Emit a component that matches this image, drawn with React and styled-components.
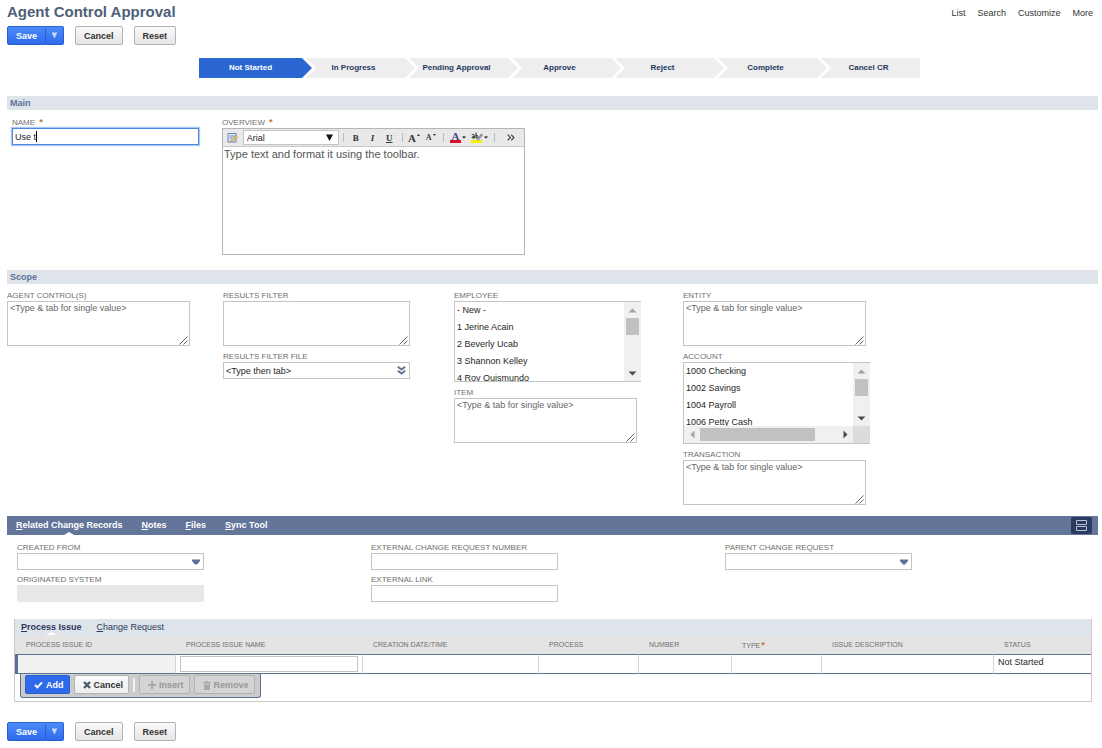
import React from "react"
import styled, { createGlobalStyle } from "styled-components"

const STEPS = [
	"Not Started",
	"In Progress",
	"Pending Approval",
	"Approve",
	"Reject",
	"Complete",
	"Cancel CR",
]

const EMPLOYEES = [
	"- New -",
	"1 Jerine Acain",
	"2 Beverly Ucab",
	"3 Shannon Kelley",
	"4 Roy Quismundo",
]

const ACCOUNTS = ["1000 Checking", "1002 Savings", "1004 Payroll", "1006 Petty Cash"]

const COLUMNS = [
	{ title: "Process Issue ID", width: 160 },
	{ title: "Process Issue Name", width: 187 },
	{ title: "Creation Date/Time", width: 176 },
	{ title: "Process", width: 100 },
	{ title: "Number", width: 93 },
	{ title: "Type", width: 90, required: true },
	{ title: "Issue Description", width: 172 },
	{ title: "Status", width: 98 },
]

const MULTI_HINT = "<Type & tab for single value>"

function FormButtons() {
	return (
		<ButtonRow>
			<SplitButton>
				<SaveButton type='button'>Save</SaveButton>
				<SaveMenuButton type='button' aria-label='Save options'>
					<svg width='7' height='7' viewBox='0 0 7 7'>
						<path d='M0.7 0.5H6.3L3.5 6.5Z' fill='#c9d9fb' />
					</svg>
				</SaveMenuButton>
			</SplitButton>
			<PlainButton type='button'>Cancel</PlainButton>
			<PlainButton type='button'>Reset</PlainButton>
		</ButtonRow>
	)
}

function Label({ htmlFor, required, children }) {
	return (
		<FieldLabel htmlFor={htmlFor}>
			{children}
			{required && <Required>*</Required>}
		</FieldLabel>
	)
}

function AreaField({ id, label, hint, wide }) {
	return (
		<Field>
			<Label htmlFor={id}>{label}</Label>
			<AreaBox $wide={wide}>
				<Area id={id} defaultValue={hint} />
				<Grip width='9' height='9' viewBox='0 0 9 9' aria-hidden='true'>
					<path d='M0.5 8.5L8.5 0.5M4.5 8.5L8.5 4.5' stroke='#666' fill='none' />
				</Grip>
			</AreaBox>
		</Field>
	)
}

function TextField({ id, label, disabled }) {
	return (
		<Field>
			<Label htmlFor={id}>{label}</Label>
			<TextInput id={id} disabled={disabled} />
		</Field>
	)
}

function SelectField({ id, label }) {
	return (
		<Field>
			<Label htmlFor={id}>{label}</Label>
			<InputBox>
				<DropDown id={id}>
					<option value=''></option>
				</DropDown>
				<svg width='8' height='6' viewBox='0 0 8 6' aria-hidden='true'>
					<path d='M0 0.5H8V2L5 5.5H3L0 2Z' fill='#5f6f9c' />
				</svg>
			</InputBox>
		</Field>
	)
}

function Triangle({ direction, dim }) {
	const paths = {
		up: "M0.5 6.5H8.5L4.5 2.5Z",
		down: "M0.5 2.5H8.5L4.5 6.5Z",
		left: "M6.5 0.5V8.5L2.5 4.5Z",
		right: "M2.5 0.5V8.5L6.5 4.5Z",
	}
	return (
		<svg width='9' height='9' viewBox='0 0 9 9'>
			<path d={paths[direction]} fill={dim ? "#a3a3a3" : "#4d4d4d"} />
		</svg>
	)
}

function ListField({ id, label, options, scrollX }) {
	return (
		<Field>
			<Label htmlFor={id}>{label}</Label>
			<ListBox $scrollX={scrollX}>
				<List id={id} multiple>
					{options.map((option) => (
						<option key={option}>{option}</option>
					))}
				</List>
				<ScrollBar aria-hidden='true'>
					<ScrollEnd><Triangle direction='up' dim /></ScrollEnd>
					<Thumb />
					<ScrollEnd $last><Triangle direction='down' /></ScrollEnd>
				</ScrollBar>
				{scrollX && (
					<>
						<ScrollBar $horizontal aria-hidden='true'>
							<ScrollEnd><Triangle direction='left' dim /></ScrollEnd>
							<Thumb $horizontal />
							<ScrollEnd $last><Triangle direction='right' /></ScrollEnd>
						</ScrollBar>
						<ScrollCorner />
					</>
				)}
			</ListBox>
		</Field>
	)
}

function EditorToolbar() {
	return (
		<Toolbar>
			<Tool type='button' $width={20} aria-label='Edit source'>
				<svg width='11' height='11' viewBox='0 0 11 11'>
					<rect x='1' y='1.5' width='8' height='8.5' fill='#dce6f7' stroke='#7486ae' />
					<path d='M2.5 4H7.5M2.5 6H5' stroke='#6f8ac4' />
					<path d='M4 8.5L9 3L10.5 4.5L5.5 9.5L3.5 10Z' fill='#e4c66a' stroke='#94875a' strokeWidth='0.6' />
				</svg>
			</Tool>
			<FontBox>
				<FontSelect aria-label='Font'>
					<option>Arial</option>
				</FontSelect>
				<svg width='7' height='7' viewBox='0 0 7 7' aria-hidden='true'>
					<path d='M0 0.5H7L3.5 7Z' fill='#111' />
				</svg>
			</FontBox>
			<Divider />
			<Tool type='button'><b>B</b></Tool>
			<Tool type='button'><i>I</i></Tool>
			<Tool type='button'><u>U</u></Tool>
			<Divider />
			<Tool type='button' aria-label='Increase size'>
				<Big>A</Big>
				<svg width='3' height='8' viewBox='0 0 3 8'>
					<path d='M0 2L1.5 0L3 2Z' fill='#333' />
				</svg>
			</Tool>
			<Tool type='button' aria-label='Decrease size'>
				<Small>A</Small>
				<svg width='3' height='8' viewBox='0 0 3 8'>
					<path d='M0 0L1.5 2L3 0Z' fill='#333' />
				</svg>
			</Tool>
			<Divider />
			<Tool type='button' $width={22} aria-label='Text color'>
				<Swatch $color='#d9122b'>A</Swatch>
				<svg width='4' height='3' viewBox='0 0 4 3'>
					<path d='M0 0.5H4L2 2.5Z' fill='#111' />
				</svg>
			</Tool>
			<Tool type='button' $width={22} aria-label='Highlight color'>
				<svg width='12' height='12' viewBox='0 0 12 12'>
					<rect x='0' y='8' width='11' height='3' fill='#f6f000' />
					<path d='M5.5 8L10 1.5L12 3L7.5 8.5Z' fill='#8c93a8' />
					<path d='M0.8 2.9C2 2 3.3 2.4 3.3 3.6V6.4M3.3 4.2C1 4.2 0.5 5.9 1.6 6.1C2.5 6.2 3.3 5.6 3.3 5M5 0.5V6C7.4 6.4 7.6 3 5.2 3.3' fill='none' stroke='#222' strokeWidth='1' />
				</svg>
				<svg width='4' height='3' viewBox='0 0 4 3'>
					<path d='M0 0.5H4L2 2.5Z' fill='#111' />
				</svg>
			</Tool>
			<Divider />
			<Tool type='button' $width={26} aria-label='More tools'>
				<svg width='8' height='7' viewBox='0 0 8 7'>
					<path d='M0.7 0.7L3.4 3.5L0.7 6.3M4.2 0.7L6.9 3.5L4.2 6.3' fill='none' stroke='#444' strokeWidth='1.2' />
				</svg>
			</Tool>
		</Toolbar>
	)
}

function IssueTable() {
	return (
		<Table>
			<colgroup>
				{COLUMNS.map((column) => (
					<Col key={column.title} $width={column.width} />
				))}
			</colgroup>
			<thead>
				<tr>
					{COLUMNS.map((column) => (
						<th key={column.title}>
							{column.title}
							{column.required && <Required $tight>*</Required>}
						</th>
					))}
				</tr>
			</thead>
			<tbody>
				<tr>
					<ReadOnlyCell />
					<td>
						<CellInput aria-label='Process Issue Name' />
					</td>
					<td />
					<td />
					<td />
					<td />
					<td />
					<td>Not Started</td>
				</tr>
			</tbody>
		</Table>
	)
}

export default function App() {
	return (
		<Page>
			<GlobalStyle />
			<Header>
				<div>
					<Title>Agent Control Approval</Title>
					<FormButtons />
				</div>
				<Nav>
					<a href='#list'>List</a>
					<a href='#search'>Search</a>
					<a href='#customize'>Customize</a>
					<a href='#more'>More</a>
				</Nav>
			</Header>

			<Steps>
				{STEPS.map((step, i) => (
					<Step key={step} $active={i === 0}>
						{step}
					</Step>
				))}
			</Steps>

			<SectionBar>Main</SectionBar>
			<MainFields>
				<Field>
					<Label htmlFor='name' required>Name</Label>
					<NameBox>
						<NameInput id='name' defaultValue='Use t' />
					</NameBox>
				</Field>
				<Field>
					<Label htmlFor='overview' required>Overview</Label>
					<Editor>
						<EditorToolbar />
						<EditorArea
							id='overview'
							defaultValue='Type text and format it using the toolbar.'
						/>
					</Editor>
				</Field>
			</MainFields>

			<SectionBar>Scope</SectionBar>
			<ScopeFields>
				<Column>
					<AreaField id='controls' label='Agent Control(s)' hint={MULTI_HINT} />
				</Column>
				<Column>
					<AreaField id='filter' label='Results Filter' wide />
					<Field>
						<Label htmlFor='filter-file'>Results Filter File</Label>
						<InputBox>
							<BareInput id='filter-file' defaultValue='<Type then tab>' />
							<svg width='9' height='9' viewBox='0 0 9 9' aria-hidden='true'>
								<path d='M0.8 0.8L4.5 3.6L8.2 0.8M0.8 4.8L4.5 7.6L8.2 4.8' fill='none' stroke='#5f7391' strokeWidth='2' />
							</svg>
						</InputBox>
					</Field>
				</Column>
				<Column>
					<ListField id='employee' label='Employee' options={EMPLOYEES} />
					<AreaField id='item' label='Item' hint={MULTI_HINT} />
				</Column>
				<Column>
					<AreaField id='entity' label='Entity' hint={MULTI_HINT} />
					<ListField id='account' label='Account' options={ACCOUNTS} scrollX />
					<AreaField id='transaction' label='Transaction' hint={MULTI_HINT} />
				</Column>
			</ScopeFields>

			<TabBar>
				<Tab href='#related' $active><u>R</u>elated Change Records</Tab>
				<Tab href='#notes'><u>N</u>otes</Tab>
				<Tab href='#files'><u>F</u>iles</Tab>
				<Tab href='#sync'><u>S</u>ync Tool</Tab>
				<LayoutButton type='button' aria-label='Toggle layout'>
					<svg width='11' height='11' viewBox='0 0 11 11'>
						<path d='M0.5 0.5H10.5V4.5H0.5ZM0.5 6.5H10.5V10.5H0.5Z' fill='none' stroke='#b9c2d6' />
					</svg>
				</LayoutButton>
			</TabBar>
			<RelatedFields>
				<Column>
					<SelectField id='created-from' label='Created From' />
					<TextField id='system' label='Originated System' disabled />
				</Column>
				<Column>
					<TextField id='request-number' label='External Change Request Number' />
					<TextField id='link' label='External Link' />
				</Column>
				<Column>
					<SelectField id='parent' label='Parent Change Request' />
				</Column>
			</RelatedFields>

			<SubList>
				<SubTabs>
					<SubTab href='#issue' $active><u>P</u>rocess Issue</SubTab>
					<SubTab href='#request'><u>C</u>hange Request</SubTab>
				</SubTabs>
				<IssueTable />
				<RowActions>
					<ActionButton type='button' $primary>
						<svg width='9' height='8' viewBox='0 0 9 8'>
							<path d='M1 4L3.4 6.4L8 1.4' fill='none' stroke='#fff' strokeWidth='2' />
						</svg>
						Add
					</ActionButton>
					<ActionButton type='button'>
						<svg width='8' height='8' viewBox='0 0 8 8'>
							<path d='M1 1L7 7M7 1L1 7' fill='none' stroke='#4d5a6e' strokeWidth='2.4' />
						</svg>
						Cancel
					</ActionButton>
					<ActionDivider />
					<ActionButton type='button' disabled>
						<svg width='8' height='8' viewBox='0 0 8 8'>
							<path d='M4 0V8M0 4H8' fill='none' stroke='#aaa' strokeWidth='2' />
						</svg>
						Insert
					</ActionButton>
					<ActionButton type='button' disabled>
						<svg width='8' height='9' viewBox='0 0 8 9'>
							<path d='M0 1H2.5V0H5.5V1H8V2.4H0ZM1 3.2H7V9H1Z' fill='#aaa' />
						</svg>
						Remove
					</ActionButton>
				</RowActions>
			</SubList>

			<FormButtons />
		</Page>
	)
}

// Styled components
const GlobalStyle = createGlobalStyle`
    body {
        margin: 0;
        background: #fff;
    }
    *, *::before, *::after {
        box-sizing: border-box;
    }
    body, button, input, select, textarea {
        font-family: "Liberation Sans", Arial, sans-serif;
        font-size: 9px;
        color: #262626;
    }
    svg {
        flex: none;
    }
`

const Page = styled.main`
    padding: 3px 4px 7px 7px;
`

const Header = styled.header`
    display: flex;
    justify-content: space-between;
    align-items: flex-start;
`

const Title = styled.h1`
    margin: 0 0 5px;
    font-size: 15px;
    line-height: 18px;
    color: #4d5f79;
`

const Nav = styled.nav`
    display: flex;
    gap: 12px;
    padding: 4px 5px 0 0;
    line-height: 12px;
    & a {
        color: #333;
        text-decoration: none;
    }
`

const ButtonRow = styled.div`
    display: flex;
    gap: 11px;
`

const SplitButton = styled.div`
    display: flex;
`

const BaseButton = styled.button`
    height: 19px;
    padding: 1px 8px 0;
    border: 1px solid #b2b2b2;
    border-radius: 2px;
    font-weight: bold;
    line-height: 16px;
    cursor: pointer;
`

const PlainButton = styled(BaseButton)`
    background: linear-gradient(#fafafa, #e5e5e5);
    color: #333;
`

const SaveButton = styled(BaseButton)`
    background: linear-gradient(#4c8bfa, #2f6aec);
    border-color: #2b5fcb;
    border-radius: 2px 0 0 2px;
    color: #fff;
`

const SaveMenuButton = styled(SaveButton)`
    display: flex;
    align-items: center;
    justify-content: center;
    width: 18px;
    padding: 0;
    border-left: 0;
    border-radius: 0 2px 2px 0;
`

const Steps = styled.ol`
    display: flex;
    justify-content: center;
    margin: 13px 0 18px;
    padding: 0 0 0 14px;
    list-style-type: none;
`

const Step = styled.li`
    position: relative;
    flex: 0 1 103px;
    height: 20px;
    font-size: 8px;
    font-weight: bold;
    line-height: 19px;
    text-align: center;
    background: ${({ $active }) => ($active ? "#2a67d0" : "#eee")};
    color: ${({ $active }) => ($active ? "#fff" : "#24395f")};
    /* white chevron with the arrow head on top of it */
    &:not(:last-child)::before,
    &:not(:last-child)::after {
        content: '';
        position: absolute;
        z-index: 1;
        top: 0;
        left: 100%;
        height: 20px;
    }
    &::before {
        width: 14px;
        background: #fff;
        clip-path: polygon(0 0, 4px 0, 100% 50%, 4px 100%, 0 100%);
    }
    &::after {
        width: 10px;
        background: inherit;
        clip-path: polygon(0 0, 100% 50%, 0 100%);
    }
`

const SectionBar = styled.h2`
    margin: 0;
    padding-left: 3px;
    background: #dfe4eb;
    color: #5c7198;
    font-size: 9px;
    line-height: 14px;
`

const Field = styled.div`
    display: flex;
    flex-direction: column;
    align-items: flex-start;
`

const FieldLabel = styled.label`
    padding-top: 1px;
    font-size: 8px;
    line-height: 10px;
    color: #6f6f6f;
    text-transform: uppercase;
    white-space: nowrap;
`

const Required = styled.span`
    margin-left: ${({ $tight }) => ($tight ? "1px" : "4px")};
    font-size: 9px;
    font-weight: bold;
    line-height: 8px;
    color: #bd7a3a;
`

const Column = styled.div`
    display: flex;
    flex-direction: column;
    gap: 5px;
`

const MainFields = styled.section`
    display: grid;
    grid-template-columns: 210px 1fr;
    padding: 7px 0 15px 5px;
`

const ScopeFields = styled.section`
    display: grid;
    grid-template-columns: 216fr 231fr 229fr 415fr;
    padding: 6px 0 11px;
`

const RelatedFields = styled.section`
    display: grid;
    grid-template-columns: repeat(3, 1fr);
    padding: 7px 19px 17px 10px;
    & ${Column} {
        gap: 4px;
    }
`

const TextInput = styled.input`
    width: 187px;
    height: 17px;
    padding: 0 2px;
    border: 1px solid #c4c4c4;
    background: #fff;
    &:disabled {
        border-color: #e8e8e8;
        background: #e8e8e8;
    }
`

const NameBox = styled.div`
    position: relative;
    /* text cursor after the typed value */
    &::after {
        content: '';
        position: absolute;
        top: 3px;
        left: 24px;
        width: 1px;
        height: 11px;
        background: #000;
    }
`

const NameInput = styled(TextInput)`
    border-color: #4d88dc;
    outline: none;
    box-shadow: 0 0 1px 1px #a9c8f3;
`

const InputBox = styled.div`
    display: flex;
    align-items: center;
    width: 187px;
    height: 17px;
    padding-right: 3px;
    border: 1px solid #c4c4c4;
`

const BareInput = styled.input`
    flex: 1;
    min-width: 0;
    padding: 0 2px;
    border: 0;
    background: none;
    outline: none;
`

const DropDown = styled.select`
    flex: 1;
    min-width: 0;
    height: 15px;
    border: 0;
    background: none;
    appearance: none;
`

const AreaBox = styled.div`
    position: relative;
    width: ${({ $wide }) => ($wide ? "187px" : "183px")};
    height: 45px;
`

const Area = styled.textarea`
    display: block;
    width: 100%;
    height: 100%;
    padding: 0 2px;
    border: 1px solid #c4c4c4;
    line-height: 12px;
    color: #666;
    resize: none;
    overflow: hidden;
`

const Grip = styled.svg`
    position: absolute;
    right: 2px;
    bottom: 1px;
    pointer-events: none;
`

const ListBox = styled.div`
    display: grid;
    grid-template-columns: 1fr 17px;
    grid-template-rows: ${({ $scrollX }) => ($scrollX ? "1fr 17px" : "1fr")};
    width: 187px;
    height: ${({ $scrollX }) => ($scrollX ? "82px" : "81px")};
    border: 1px solid #c4c4c4;
    border-right: 0;
`

const List = styled.select`
    min-width: 0;
    min-height: 0;
    height: 100%;
    padding: 3px 0 0;
    border: 0;
    outline: none;
    overflow: hidden;
    & option {
        min-height: 17px;
        padding: 0 2px;
        line-height: 17px;
        color: #262626;
    }
`

const ScrollBar = styled.div`
    display: flex;
    flex-direction: ${({ $horizontal }) => ($horizontal ? "row" : "column")};
    align-items: center;
    background: #f0f0f0;
`

const ScrollEnd = styled.span`
    display: flex;
    flex: none;
    align-items: center;
    justify-content: center;
    width: 16px;
    height: 16px;
    margin: ${({ $last }) => ($last ? "auto 0 auto auto" : "0")};
    ${ScrollBar} > &:last-child {
        align-self: center;
    }
`

const Thumb = styled.span`
    flex: none;
    width: ${({ $horizontal }) => ($horizontal ? "115px" : "13px")};
    height: ${({ $horizontal }) => ($horizontal ? "13px" : "17px")};
    background: #c1c1c1;
    & + ${ScrollEnd} {
        margin: ${({ $horizontal }) => ($horizontal ? "0 0 0 auto" : "auto 0 0")};
    }
`

const ScrollCorner = styled.span`
    background: #dcdcdc;
`

const Editor = styled.div`
    width: 303px;
    border: 1px solid #b6b6b6;
`

const Toolbar = styled.div`
    display: flex;
    align-items: center;
    height: 18px;
    background: #e9e9e9;
    border-bottom: 1px solid #c8c8c8;
`

const Tool = styled.button`
    display: flex;
    align-items: center;
    justify-content: center;
    gap: 1px;
    width: ${({ $width = 17 }) => $width}px;
    height: 16px;
    padding: 0;
    border: 0;
    background: none;
    font-family: "Liberation Serif", "Times New Roman", serif;
    font-weight: bold;
    color: #333;
    cursor: pointer;
`

const Big = styled.span`
    font-size: 11px;
`

const Small = styled.span`
    font-size: 8px;
`

const Swatch = styled.span`
    width: 11px;
    border-bottom: 3px solid ${({ $color }) => $color};
    font-size: 11px;
    line-height: 8px;
    color: #3c4d85;
`

const Divider = styled.span`
    width: 1px;
    height: 9px;
    margin: 0 3px 0 4px;
    background: #bdbdbd;
`

const FontBox = styled.div`
    display: flex;
    align-items: center;
    width: 98px;
    height: 15px;
    padding-right: 5px;
    border: 1px solid #c4c4c4;
    background: #fff;
`

const FontSelect = styled.select`
    flex: 1;
    min-width: 0;
    padding: 0 3px;
    border: 0;
    background: none;
    appearance: none;
`

const EditorArea = styled.textarea`
    display: block;
    width: 100%;
    height: 107px;
    padding: 1px;
    border: 0;
    font-size: 11px;
    line-height: 13px;
    color: #555;
    resize: none;
    outline: none;
`

const TabBar = styled.nav`
    display: flex;
    gap: 19px;
    padding: 0 6px 0 9px;
    background: #637599;
`

const Tab = styled.a`
    position: relative;
    color: #fff;
    font-weight: bold;
    line-height: 19px;
    text-decoration: none;
    /* notch that points out the open tab */
    &::after {
        content: '';
        display: ${({ $active }) => ($active ? "block" : "none")};
        position: absolute;
        bottom: 0;
        left: calc(50% - 5px);
        border: 5px solid transparent;
        border-top: 0;
        border-bottom: 3px solid #fff;
    }
`

const LayoutButton = styled.button`
    display: flex;
    align-items: center;
    justify-content: center;
    align-self: center;
    width: 21px;
    height: 17px;
    margin-left: auto;
    padding: 0;
    border: 0;
    border-radius: 2px;
    background: #2a3a60;
`

const SubList = styled.section`
    margin: 0 6px 20px 7px;
    border: 1px solid #c9c9c9;
    border-top: 0;
    padding-bottom: 3px;
`

const SubTabs = styled.nav`
    display: flex;
    gap: 15px;
    padding-left: 6px;
    background: #dfe4eb;
`

const SubTab = styled(Tab)`
    font-weight: ${({ $active }) => ($active ? "bold" : "normal")};
    line-height: 16px;
    color: #2b3a5c;
`

const Table = styled.table`
    width: 100%;
    table-layout: fixed;
    border-spacing: 0;
    & th {
        height: 19px;
        padding: 0 0 0 11px;
        background: #e4e4e4;
        color: #6f6f6f;
        font-size: 7px;
        font-weight: normal;
        text-align: left;
        text-transform: uppercase;
        white-space: nowrap;
    }
    & td {
        height: 20px;
        padding: 1px 4px;
        border-top: 1px solid #5f7199;
        border-bottom: 1px solid #5f7199;
        border-left: 1px solid #d5d5d5;
        line-height: 12px;
        vertical-align: top;
    }
`

const Col = styled.col`
    width: ${({ $width }) => $width}px;
`

const ReadOnlyCell = styled.td`
    ${Table} && {
        border-left: 3px solid #5f7199;
    }
    background: repeating-conic-gradient(#ececec 0 25%, #f7f7f7 0 50%) 0 0 / 2px 2px;
`

const CellInput = styled(TextInput)`
    display: block;
    width: 100%;
    height: 16px;
`

const RowActions = styled.div`
    display: flex;
    align-items: center;
    gap: 4px;
    width: fit-content;
    height: 24px;
    margin-left: 5px;
    padding: 0 5px 2px 4px;
    border: 1px solid #5f7199;
    border-top: 0;
    border-radius: 0 0 3px 3px;
    background: #ccc;
`

const ActionButton = styled(BaseButton)`
    display: flex;
    align-items: center;
    gap: 3px;
    padding: 1px 5px 0 8px;
    background: ${({ $primary }) => ($primary ? "#2f6aec" : "linear-gradient(#fafafa, #eee)")};
    border-color: ${({ $primary }) => ($primary ? "#2b5fcb" : "#b2b2b2")};
    color: ${({ $primary }) => ($primary ? "#fff" : "#333")};
    &:disabled {
        background: #d4d4d4;
        color: #999;
        cursor: default;
    }
`

const ActionDivider = styled.span`
    width: 2px;
    height: 14px;
    background: #f2f2f2;
`
